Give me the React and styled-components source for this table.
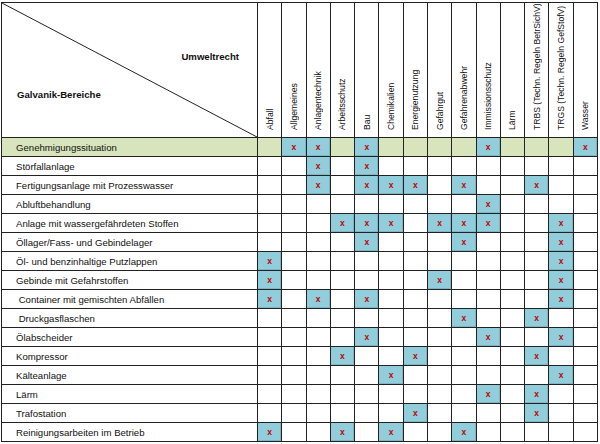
import React from 'react'
import styled, { createGlobalStyle } from 'styled-components'

const GlobalStyle = createGlobalStyle`
  html, body {
    margin: 0;
    padding: 0;
    background: #fff;
  }
  body {
    font-family: "Liberation Sans", Arial, sans-serif;
  }
`

const Page = styled.div`
  padding: 2px 0 0 1px;
`

const Table = styled.table`
  width: 597px;
  border-collapse: collapse;
  table-layout: fixed;
  color: #111;
  font-family: "Liberation Sans", Arial, sans-serif;
`

const Col = styled.col`
  width: ${p => p.$w || 'auto'};
`

const CornerCell = styled.th`
  position: relative;
  height: 134px;
  padding: 0;
  border: 1px solid #222;
  vertical-align: top;
`

const Diagonal = styled.svg`
  position: absolute;
  left: 0;
  top: 0;
  width: 100%;
  height: 100%;
`

const CornerLabels = styled.div`
  display: flex;
  flex-direction: column;
  font-size: 9.6px;
  font-weight: bold;
  line-height: 11px;
`

const TopLabel = styled.span`
  align-self: flex-end;
  margin: 48px 18px 0 0;
`

const BottomLabel = styled.span`
  align-self: flex-start;
  margin: 27px 0 0 15px;
`

const HeadCell = styled.th`
  padding: 0 0 7px;
  border: 1px solid #222;
  vertical-align: bottom;
  font-weight: normal;
  font-size: 8.6px;
`

const Rotated = styled.div`
  writing-mode: vertical-rl;
  transform: rotate(180deg);
  white-space: nowrap;
  text-align: start;
  height: 125px;
  margin: 0 auto;
  line-height: 10px;
  overflow: visible;
`

const Row = styled.tr`
  background: ${p => (p.$highlight ? '#d8e4bc' : '#fff')};
`

const LabelCell = styled.td`
  height: 18px;
  padding: 0 0 0 14px;
  border: 1px solid #222;
  font-size: 9.6px;
  white-space: pre;
  vertical-align: middle;
`

const MarkCell = styled.td`
  height: 18px;
  padding: 0;
  border: 1px solid #222;
  text-align: center;
  vertical-align: middle;
  background: ${p => (p.$on ? '#92cddc' : 'transparent')};
  box-shadow: ${p => (p.$on ? 'inset -1px -1px 0 #7fb6c5' : 'none')};
  color: #c00000;
  font-size: 8.5px;
  font-weight: bold;
  line-height: 10px;
`

const columns = [
  'Abfall',
  'Allgemeines',
  'Anlagentechnik',
  'Arbeitsschutz',
  'Bau',
  'Chemikalien',
  'Energienutzung',
  'Gefahrgut',
  'Gefahrenabwehr',
  'Immissionsschutz',
  'Lärm',
  'TRBS (Techn. Regeln BetrSichV)',
  'TRGS (Techn. Regeln GefStofV)',
  'Wasser',
]

const rows = [
  { label: 'Genehmigungssituation', marks: [1, 2, 4, 9, 13], highlight: true },
  { label: 'Störfallanlage', marks: [2, 4] },
  { label: 'Fertigungsanlage mit Prozesswasser', marks: [2, 4, 5, 6, 8, 11] },
  { label: 'Abluftbehandlung', marks: [9] },
  { label: 'Anlage mit wassergefährdeten Stoffen', marks: [3, 4, 5, 7, 8, 9, 12] },
  { label: 'Öllager/Fass- und Gebindelager', marks: [4, 8, 12] },
  { label: 'Öl- und benzinhaltige Putzlappen', marks: [0, 12] },
  { label: 'Gebinde mit Gefahrstoffen', marks: [0, 7, 12] },
  { label: ' Container mit gemischten Abfällen', marks: [0, 2, 4, 12] },
  { label: ' Druckgasflaschen', marks: [8, 11] },
  { label: 'Ölabscheider', marks: [4, 9, 12] },
  { label: 'Kompressor', marks: [3, 6, 11] },
  { label: 'Kälteanlage', marks: [5, 12] },
  { label: 'Lärm', marks: [9, 11] },
  { label: 'Trafostation', marks: [6, 11] },
  { label: 'Reinigungsarbeiten im Betrieb', marks: [0, 3, 5, 8] },
]

export default function App() {
  return (
    <Page>
      <GlobalStyle />
      <Table>
        <colgroup>
          <Col $w="256px" />
          {columns.map(c => <Col key={c} />)}
        </colgroup>
        <thead>
          <tr>
            <CornerCell>
              <Diagonal viewBox="0 0 100 100" preserveAspectRatio="none">
                <line x1="0" y1="0" x2="100" y2="100" stroke="#222" strokeWidth="1" vectorEffect="non-scaling-stroke" />
              </Diagonal>
              <CornerLabels>
                <TopLabel>Umweltrecht</TopLabel>
                <BottomLabel>Galvanik-Bereiche</BottomLabel>
              </CornerLabels>
            </CornerCell>
            {columns.map(c => (
              <HeadCell key={c}>
                <Rotated>{c}</Rotated>
              </HeadCell>
            ))}
          </tr>
        </thead>
        <tbody>
          {rows.map(r => (
            <Row key={r.label} $highlight={r.highlight}>
              <LabelCell>{r.label}</LabelCell>
              {columns.map((c, i) => {
                const on = r.marks.includes(i)
                return (
                  <MarkCell key={c} $on={on}>
                    {on ? 'x' : ''}
                  </MarkCell>
                )
              })}
            </Row>
          ))}
        </tbody>
      </Table>
    </Page>
  )
}
